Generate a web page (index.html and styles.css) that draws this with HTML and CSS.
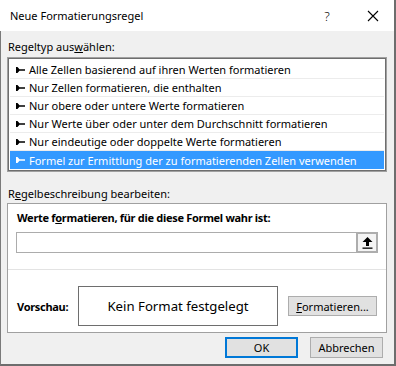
FILE: index.html
```
<!DOCTYPE html>
<html lang="de">
<head>
    <meta charset="UTF-8">
    <title>Neue Formatierungsregel</title>
    <link rel="stylesheet" href="styles.css">
</head>
<body>
    <div class="window">
        <!-- Title bar -->
        <div class="titlebar">
            <span class="title">Neue Formatierungsregel</span>
            <span class="caption-btn">?</span>
            <span class="caption-btn close">
                <svg width="12" height="12" viewBox="0 0 12 12"><path d="M1 1 L11 11 M11 1 L1 11" stroke="#000" stroke-width="1.1" fill="none"/></svg>
            </span>
        </div>

        <div class="content">
            <div class="label first">Regeltyp aus<u>w</u>ählen:</div>
            <div class="listbox">
                <div class="row"><svg class="pointer" width="9" height="6" viewBox="0 0 9 6"><path d="M0 0 L0 6 L1.5 6 L3.5 3.8 L9 3.8 L9 2.2 L3.5 2.2 L1.5 0 Z"/></svg>Alle Zellen basierend auf ihren Werten formatieren</div>
                <div class="row"><svg class="pointer" width="9" height="6" viewBox="0 0 9 6"><path d="M0 0 L0 6 L1.5 6 L3.5 3.8 L9 3.8 L9 2.2 L3.5 2.2 L1.5 0 Z"/></svg>Nur Zellen formatieren, die enthalten</div>
                <div class="row"><svg class="pointer" width="9" height="6" viewBox="0 0 9 6"><path d="M0 0 L0 6 L1.5 6 L3.5 3.8 L9 3.8 L9 2.2 L3.5 2.2 L1.5 0 Z"/></svg>Nur obere oder untere Werte formatieren</div>
                <div class="row"><svg class="pointer" width="9" height="6" viewBox="0 0 9 6"><path d="M0 0 L0 6 L1.5 6 L3.5 3.8 L9 3.8 L9 2.2 L3.5 2.2 L1.5 0 Z"/></svg>Nur Werte über oder unter dem Durchschnitt formatieren</div>
                <div class="row"><svg class="pointer" width="9" height="6" viewBox="0 0 9 6"><path d="M0 0 L0 6 L1.5 6 L3.5 3.8 L9 3.8 L9 2.2 L3.5 2.2 L1.5 0 Z"/></svg>Nur eindeutige oder doppelte Werte formatieren</div>
                <div class="row selected"><svg class="pointer" width="9" height="6" viewBox="0 0 9 6"><path d="M0 0 L0 6 L1.5 6 L3.5 3.8 L9 3.8 L9 2.2 L3.5 2.2 L1.5 0 Z"/></svg>Formel zur Ermittlung der zu formatierenden Zellen verwenden</div>
            </div>

            <div class="label second">R<u>e</u>gelbeschreibung bearbeiten:</div>
            <div class="desc-box">
                <div class="bold-label">Werte f<u>o</u>rmatieren, für die diese Formel wahr ist:</div>
                <div class="formula-row">
                    <div class="formula-input"></div>
                    <div class="ref-btn">
                        <svg width="11" height="12" viewBox="0 0 11 12"><path d="M5.5 0 L10.5 5 L7 5 L7 9 L4 9 L4 5 L0.5 5 Z" fill="#000"/><rect x="0.5" y="10.5" width="10" height="1.3" fill="#000"/></svg>
                    </div>
                </div>
                <div class="divider"></div>
                <div class="preview-row">
                    <span class="bold-label preview-label">Vorschau:</span>
                    <div class="preview">Kein Format festgelegt</div>
                    <button class="btn format-btn"><u>F</u>ormatieren...</button>
                </div>
            </div>

            <div class="actions">
                <button class="btn default">OK</button>
                <button class="btn">Abbrechen</button>
            </div>
        </div>
    </div>
</body>
</html>
```

FILE: styles.css
```
html, body {
    margin: 0;
    padding: 0;
}
body {
    font-family: "Segoe UI", "Noto Sans", sans-serif;
    font-size: 11px;
    color: #000;
    background: #fff;
}
.window {
    width: 396px;
    height: 366px;
    box-sizing: border-box;
    background: #f0f0f0;
    border-left: 1px solid #7a7a7a;
    border-right: 2px solid #6d6d6d;
    border-bottom: 2px solid #6d6d6d;
    display: flex;
    flex-direction: column;
}
.titlebar {
    height: 31px;
    background: #fff;
    display: flex;
    align-items: center;
    margin-left: -1px;
    padding-left: 10px;
}
.title {
    flex: 1;
}
.caption-btn {
    width: 46px;
    height: 31px;
    display: flex;
    align-items: center;
    justify-content: center;
    font-size: 13px;
    font-weight: 300;
}
.close {
    margin-right: -2px;
}
.content {
    padding: 0 7px 0 6px;
    display: flex;
    flex-direction: column;
}
.label {
    line-height: 16px;
    padding-left: 1px;
}
.label.first {
    margin-top: 8px;
    margin-bottom: 2px;
}
.label.second {
    margin-top: 14px;
    margin-bottom: 1px;
}
.listbox {
    width: 380px;
    box-sizing: border-box;
    background: #fff;
    border: 1px solid #a0a0a0;
    box-shadow: inset 0 0 0 1px #6e6e6e;
    padding: 3px 2px 2px 2px;
}
.row {
    height: 18px;
    line-height: 17px;
    box-sizing: border-box;
    border-bottom: 1px solid #ececec;
    display: flex;
    align-items: center;
    padding-left: 6px;
    white-space: nowrap;
}
.row:last-child {
    border-bottom: none;
}
.pointer {
    fill: #000;
    margin-right: 4px;
    flex: none;
}
.row.selected {
    background: #3399ff;
    color: #fff;
}
.row.selected .pointer {
    fill: #fff;
}
.desc-box {
    width: 380px;
    height: 130px;
    box-sizing: border-box;
    background: #fff;
    border: 1px solid #a0a0a0;
    display: flex;
    flex-direction: column;
}
.bold-label {
    font-weight: bold;
    letter-spacing: -0.3px;
}
.desc-box > .bold-label {
    line-height: 16px;
    margin: 6px 0 0 9px;
}
.formula-row {
    display: flex;
    margin: 6px 0 0 8px;
}
.formula-input {
    width: 340px;
    height: 21px;
    box-sizing: border-box;
    border: 1px solid #acacac;
    border-right: none;
    background: #fff;
}
.ref-btn {
    width: 22px;
    height: 21px;
    box-sizing: border-box;
    border: 2px solid #adadad;
    background: #f4f4f4;
    display: flex;
    align-items: center;
    justify-content: center;
}
.divider {
    height: 1px;
    background: #e3e3e3;
    margin-top: 16px;
}
.preview-row {
    display: flex;
    align-items: center;
    margin-top: 16px;
    padding-left: 9px;
}
.preview-label {
    width: 61px;
}
.preview {
    width: 200px;
    height: 40px;
    box-sizing: border-box;
    border: 1px solid #6e6e6e;
    display: flex;
    align-items: center;
    justify-content: center;
    font-size: 13.2px;
}
.btn {
    font-family: inherit;
    font-size: 11px;
    color: #000;
    background: #e1e1e1;
    border: 1px solid #adadad;
    height: 21px;
    padding: 0;
    box-sizing: border-box;
}
.format-btn {
    width: 89px;
    height: 20px;
    margin-left: 10px;
}
.actions {
    display: flex;
    justify-content: flex-end;
    gap: 12px;
    margin-top: 4px;
    padding-right: 4px;
}
.actions .btn {
    width: 73px;
}
.btn.default {
    border: 2px solid #0078d7;
}
```
